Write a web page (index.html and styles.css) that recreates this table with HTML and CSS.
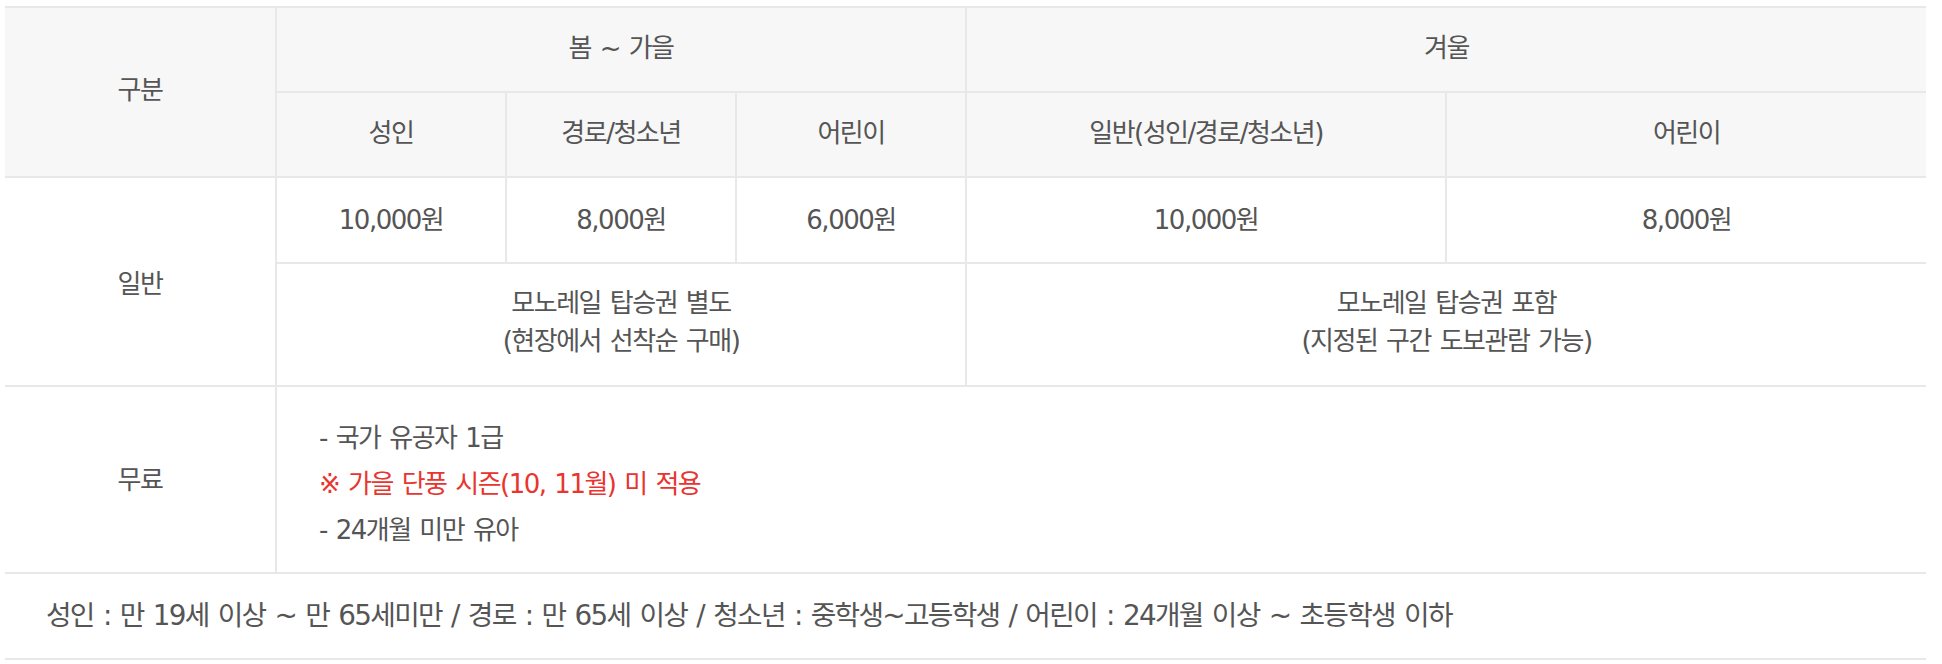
FILE: index.html
```html
<!DOCTYPE html>
<html lang="ko">
    <head>
	<meta charset="UTF-8">
	<title>이용요금</title>
	<link rel="stylesheet" href="styles.css">
    </head>
    <body>
      <div class="wrap">
	<table class="price">
	  <colgroup>
	    <col class="c_gubun">
	    <col class="c_small">
	    <col class="c_small">
	    <col class="c_small">
	    <col class="c_wide">
	    <col class="c_wide">
	  </colgroup>
	  <thead>
	    <tr class="row_head">
	      <th rowspan="2">구분</th>
	      <th colspan="3">봄 ~ 가을</th>
	      <th colspan="2">겨울</th>
	    </tr>
	    <tr class="row_head">
	      <th>성인</th>
	      <th>경로/청소년</th>
	      <th>어린이</th>
	      <th>일반(성인/경로/청소년)</th>
	      <th>어린이</th>
	    </tr>
	  </thead>
	  <tbody>
	    <tr class="row_price">
	      <th rowspan="2">일반</th>
	      <td>10,000원</td>
	      <td>8,000원</td>
	      <td>6,000원</td>
	      <td>10,000원</td>
	      <td>8,000원</td>
	    </tr>
	    <tr class="row_mono">
	      <td colspan="3">모노레일 탑승권 별도<br>(현장에서 선착순 구매)</td>
	      <td colspan="2">모노레일 탑승권 포함<br>(지정된 구간 도보관람 가능)</td>
	    </tr>
	    <tr class="row_free">
	      <th>무료</th>
	      <td colspan="5" class="free_list">
		<p>- 국가 유공자 1급</p>
		<p class="warn">※ 가을 단풍 시즌(10, 11월) 미 적용</p>
		<p>- 24개월 미만 유아</p>
	      </td>
	    </tr>
	  </tbody>
	  <tfoot>
	    <tr class="row_note">
	      <td colspan="6">성인 : 만 19세 이상 ~ 만 65세미만 / 경로 : 만 65세 이상 / 청소년 : 중학생~고등학생 / 어린이 : 24개월 이상 ~ 초등학생 이하</td>
	    </tr>
	  </tfoot>
	</table>
      </div>
    </body>
</html>
```

FILE: styles.css
```css
body {
	margin: 0px;
	padding: 0px;
	background-color: white;
	font-family: "DejaVu Sans", "Noto Sans CJK KR", sans-serif;
	color: #555;
}

.wrap {
	padding: 6px 0 0 5px;
}

.price {
	width: 1921px;
	table-layout: fixed;
	border-collapse: collapse;
	border-top: 2px solid #aaa;
	font-size: 26px;
	letter-spacing: -1.5px;
	word-spacing: 2px;
	line-height: 38px;
}

.c_gubun { width: 271px; }
.c_small { width: 230px; }
.c_wide { width: 480px; }

.price th,
.price td {
	font-weight: normal;
	text-align: center;
	vertical-align: middle;
	border: 2px solid #e8e8e8;
	padding: 0;
}
.price tr > :first-child { border-left: none; }
.price tr > :last-child { border-right: none; }
.price thead th {
	background-color: #f7f7f7;
	padding-bottom: 4px;
}

.row_head { height: 85px; }
.row_price { height: 86px; }
.row_price th { padding-top: 4px; }
.row_mono { height: 123px; }
.row_mono td { padding-bottom: 6px; }
.row_free { height: 187px; }

.free_list {
	text-align: left !important;
	padding-left: 42px !important;
	padding-top: 8px !important;
}
.free_list p {
	margin: 0;
	line-height: 46px;
}
.warn { color: #e8352f; }

.row_note { height: 86px; }
.row_note td {
	text-align: left !important;
	padding-left: 41px !important;
	border-left: none;
	border-right: none;
	font-size: 27.8px;
	letter-spacing: -1.7px;
}
```
